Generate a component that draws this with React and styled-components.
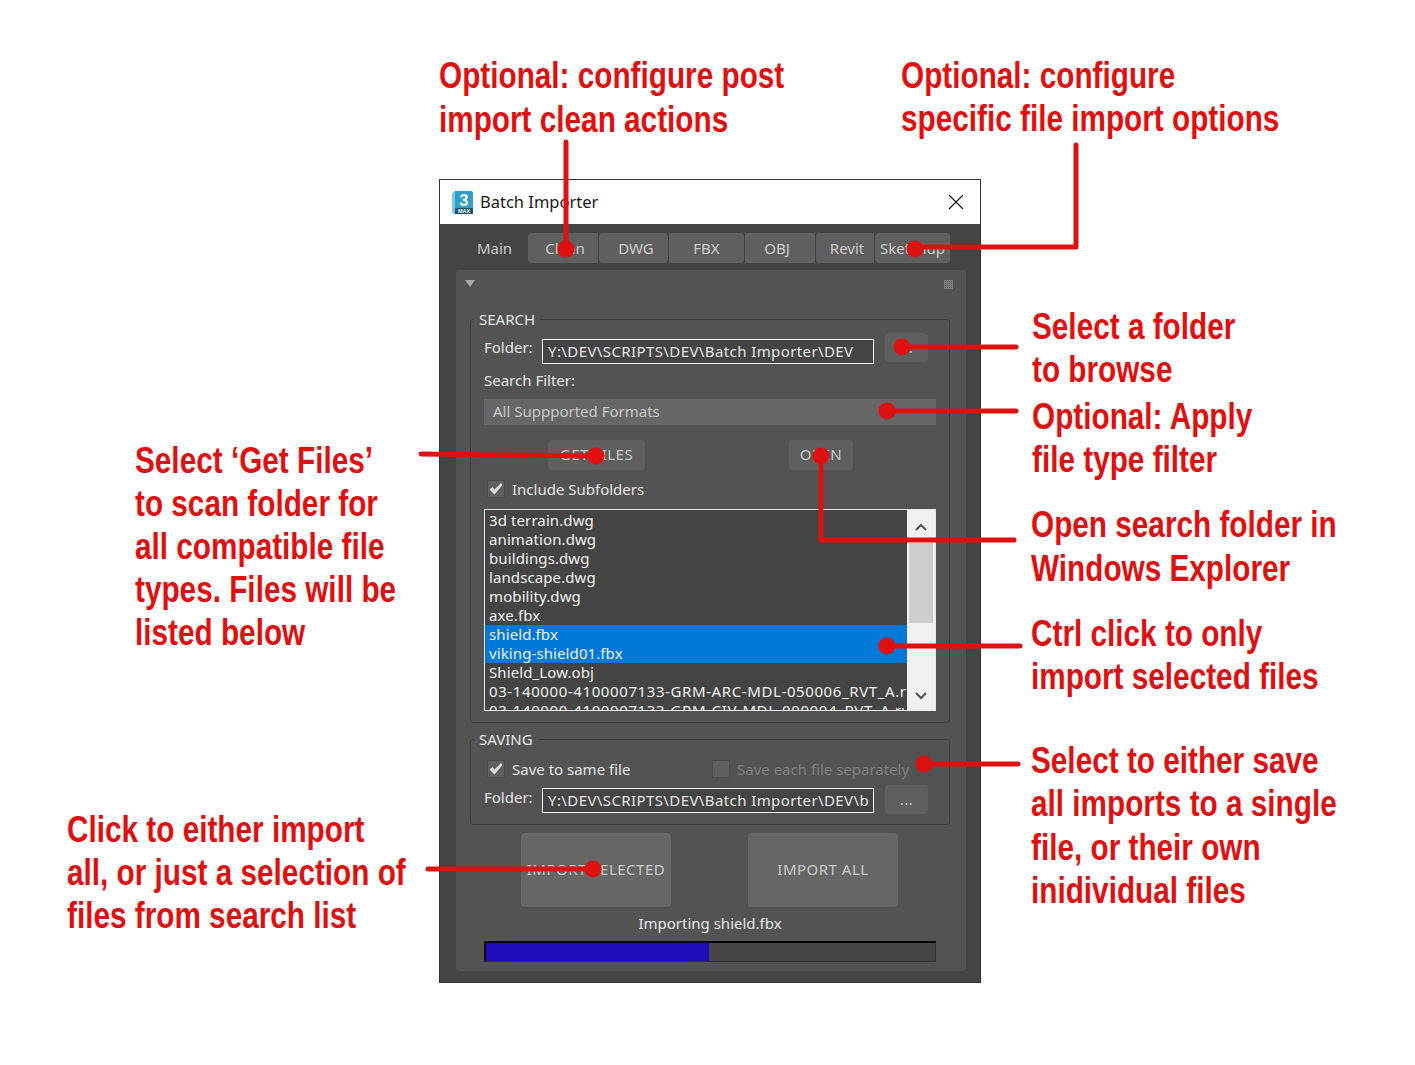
import React from 'react';
import styled, { createGlobalStyle } from 'styled-components';

const GlobalStyle = createGlobalStyle`
  html, body {
    margin: 0;
    background: #fff;
  }
`;

const Page = styled.div`
  position: relative;
  width: 1415px;
  height: 1065px;
  overflow: hidden;
  padding: 179px 0 0 439px;
  box-sizing: border-box;
  font-family: "Noto Sans", "DejaVu Sans Condensed", sans-serif;
  font-size: 15px;
  line-height: 16px;
`;

const Window = styled.div`
  width: 542px;
  height: 804px;
  box-sizing: border-box;
  border: 1px solid #333;
  background: #444;
  display: flex;
  flex-direction: column;
`;

const TitleBar = styled.div`
  height: 44px;
  flex: none;
  background: #fff;
  color: #1a1a1a;
  display: flex;
  align-items: center;
  padding: 0 16px 0 12px;
  font-size: 16.5px;
`;

const TitleText = styled.span`
  margin-left: 6px;
  flex: 1;
`;

const Tabs = styled.div`
  display: flex;
  margin: 9px 0 0 16px;
  height: 30px;
  gap: 1px;
`;

const Tab = styled.div`
  width: ${(p) => p.$w}px;
  box-sizing: border-box;
  display: flex;
  align-items: center;
  justify-content: center;
  padding: 0 ${(p) => p.$pr || 0}px 0 ${(p) => p.$pl || 0}px;
  color: #ccc;
  background: ${(p) => (p.$active ? 'transparent' : '#5f5f5f')};
  border-radius: ${(p) => p.$radius || '4px'};
`;

const Panel = styled.div`
  width: 510px;
  height: 701px;
  box-sizing: border-box;
  margin: 7px 0 0 16px;
  background: #535353;
  border-radius: 3px;
  padding: 0 17px 0 14px;
`;

const PanelHead = styled.div`
  height: 49px;
  display: flex;
  justify-content: space-between;
  padding-top: 10px;
  box-sizing: border-box;
  margin-left: -5px;
  margin-right: -4px;
`;

const Triangle = styled.div`
  width: 0;
  height: 0;
  border-left: 5px solid transparent;
  border-right: 5px solid transparent;
  border-top: 7px solid #a8a8a8;
`;

const Grip = styled.div`
  width: 9px;
  height: 9px;
  background-image: linear-gradient(#808080 1px, transparent 1px), linear-gradient(90deg, #808080 1px, #535353 1px);
  background-size: 2px 2px;
`;

const Group = styled.div`
  position: relative;
  box-sizing: border-box;
  width: 480px;
  height: ${(p) => p.$h}px;
  margin-top: ${(p) => p.$mt || 0}px;
  border: 1px solid #3e3e3e;
  border-radius: 3px;
  padding: ${(p) => p.$pt}px 0 0 13px;
`;

const Legend = styled.span`
  position: absolute;
  left: 3px;
  top: -9px;
  padding: 0 5px;
  background: #535353;
  color: #e6e6e6;
`;

const FolderRow = styled.div`
  display: flex;
  align-items: flex-start;
  height: 29px;
  margin-top: ${(p) => p.$mt || 0}px;
`;

const FieldLabel = styled.span`
  display: block;
  color: #e6e6e6;
  margin-top: ${(p) => p.$mt || 0}px;
  width: ${(p) => (p.$w ? `${p.$w}px` : 'auto')};
`;

const PathInput = styled.div`
  box-sizing: border-box;
  width: 332px;
  height: 25px;
  margin-top: ${(p) => p.$mt}px;
  border: 1px solid #f0f0f0;
  background: #444;
  color: #e6e6e6;
  padding: 0 5px;
  line-height: 22px;
  letter-spacing: 0.4px;
  white-space: nowrap;
  overflow: hidden;
`;

const Button = styled.div`
  box-sizing: border-box;
  width: ${(p) => p.$w}px;
  height: ${(p) => p.$h}px;
  margin-left: ${(p) => p.$ml || 0}px;
  padding-bottom: 2px;
  background: ${(p) => p.$bg || '#5f5f5f'};
  border-radius: 4px;
  color: #c8c8c8;
  letter-spacing: 0.5px;
  display: flex;
  align-items: center;
  justify-content: center;
  white-space: nowrap;
`;

const Select = styled.div`
  box-sizing: border-box;
  width: 452px;
  height: 26px;
  margin-top: 11px;
  background: #666;
  color: #c8c8c8;
  padding: 0 9px 2px;
  display: flex;
  align-items: center;
  justify-content: space-between;
`;

const SelectMark = styled.span`
  margin-right: 4px;
  width: 2px;
  height: 2px;
  background: #c8c8c8;
`;

const ButtonRow = styled.div`
  display: flex;
  margin-top: 15px;
  padding-left: 64px;
`;

const CheckRow = styled.div`
  display: flex;
  align-items: center;
  margin: ${(p) => p.$mt || 0}px 0 0 3px;
  height: 18px;
`;

const CheckOption = styled.div`
  display: flex;
  align-items: center;
  width: ${(p) => (p.$w ? `${p.$w}px` : 'auto')};
`;

const CheckBox = styled.span`
  box-sizing: border-box;
  width: 18px;
  height: 18px;
  background: #5f5f5f;
  border: 1px solid #4a4a4a;
  display: flex;
  align-items: center;
  justify-content: center;
`;

const CheckLabel = styled.span`
  margin-left: 7px;
  white-space: nowrap;
  color: ${(p) => (p.$disabled ? '#808080' : '#e6e6e6')};
`;

const ListBox = styled.div`
  box-sizing: border-box;
  width: 452px;
  height: 202px;
  margin-top: 11px;
  border: 1px solid #e6e6e6;
  background: #444;
  display: flex;
  overflow: hidden;
`;

const ListRows = styled.div`
  flex: 1;
  min-width: 0;
  padding-top: 1px;
  overflow: hidden;
`;

const ListRow = styled.div`
  height: 19px;
  line-height: 19px;
  padding-left: 4px;
  white-space: nowrap;
  letter-spacing: ${(p) => (p.$long ? '0.6px' : '0.1px')};
  color: #f0f0f0;
  background: ${(p) => (p.$selected ? '#0078d7' : 'transparent')};
`;

const ScrollBar = styled.div`
  width: 28px;
  flex: none;
  background: #f0f0f0;
  display: flex;
  flex-direction: column;
  align-items: center;
`;

const ScrollUp = styled.div`
  height: 33px;
  flex: none;
  display: flex;
  align-items: center;
  justify-content: center;
`;

const ScrollDown = styled.div`
  flex: 1;
  display: flex;
  align-items: flex-end;
  justify-content: center;
  padding-bottom: 10px;
`;

const ScrollThumb = styled.div`
  width: 24px;
  height: 80px;
  background: #cdcdcd;
  flex: none;
`;

const ImportRow = styled.div`
  display: flex;
  gap: 77px;
  margin: 8px 0 0 51px;
`;

const Status = styled.div`
  margin-top: 8px;
  width: 480px;
  text-align: center;
  color: #e6e6e6;
`;

const Progress = styled.div`
  box-sizing: border-box;
  width: 452px;
  height: 21px;
  margin: 10px 0 0 14px;
  background: #444;
  border-top: 2px solid #000;
  border-left: 2px solid #000;
  border-right: 1px solid #333;
  border-bottom: 1px solid #333;
`;

const ProgressFill = styled.div`
  height: 100%;
  background: #1f0cbf;
`;

const Callout = styled.div`
  position: absolute;
  left: ${(p) => p.$x}px;
  top: ${(p) => p.$y}px;
  color: #de1010;
  font-family: "Liberation Sans", sans-serif;
  font-weight: 700;
  font-size: 37.5px;
  line-height: ${(p) => p.$lh || 43.4}px;
  white-space: pre;
  transform: scaleX(0.793);
  transform-origin: left top;
`;

const Overlay = styled.svg`
  position: absolute;
  left: 0;
  top: 0;
  pointer-events: none;
`;

const MaxLogo = () => (
  <svg width="22" height="25" viewBox="0 0 22 25">
    <path d="M0 5 Q0 2 3 1 V18 H21 V24 H3 Q0 24 0 21 Z" fill="#7cc8de" />
    <path d="M3 1 H19 Q21 1 21 3 V18 H3 Z" fill="#2f9fc6" />
    <path d="M3 18 H21 V24 H3 Z" fill="#17566e" />
    <text x="12" y="15.5" textAnchor="middle" fontSize="16" fontWeight="700" fontFamily="Liberation Sans" fill="#fff">3</text>
    <text x="12" y="23" textAnchor="middle" fontSize="5.5" fontWeight="700" fontFamily="Liberation Sans" fill="#fff">MAX</text>
  </svg>
);

const CloseIcon = () => (
  <svg width="16" height="16" viewBox="0 0 16 16">
    <path d="M1 1 L15 15 M15 1 L1 15" stroke="#1a1a1a" strokeWidth="1.2" fill="none" />
  </svg>
);

const CheckMark = () => (
  <svg width="14" height="12" viewBox="0 0 14 12">
    <path d="M0.5 6.5 L3.5 4 L5.5 6.5 L12 0 L13.5 2 L5.5 11.5 Z" fill="#dcdcdc" />
  </svg>
);

const Chevron = ({ up }) => (
  <svg width="12" height="8" viewBox="0 0 12 8">
    <path d={up ? 'M1 7 L6 2 L11 7' : 'M1 1 L6 6 L11 1'} stroke="#555" strokeWidth="2" fill="none" />
  </svg>
);

const tabs = [
  { label: 'Main', w: 71, active: true, pl: 6 },
  { label: 'Clean', w: 70, radius: '4px 0 0 4px', pl: 4 },
  { label: 'DWG', w: 69, pl: 5 },
  { label: 'FBX', w: 75, radius: '0 4px 4px 0' },
  { label: 'OBJ', w: 70, radius: '0', pr: 6 },
  { label: 'Revit', w: 58, radius: '3px 0 0 3px', pl: 4 },
  { label: 'Sketchup', w: 75 },
];

const files = [
  '3d terrain.dwg',
  'animation.dwg',
  'buildings.dwg',
  'landscape.dwg',
  'mobility.dwg',
  'axe.fbx',
  'shield.fbx',
  'viking-shield01.fbx',
  'Shield_Low.obj',
  '03-140000-4100007133-GRM-ARC-MDL-050006_RVT_A.rvt',
  '03-140000-4100007133-GRM-CIV-MDL-000004_RVT_A.rvt',
];

const callouts = [
  { x: 439, y: 53, lh: 44, text: 'Optional: configure post\nimport clean actions' },
  { x: 901, y: 54, text: 'Optional: configure\nspecific file import options' },
  { x: 1032, y: 305, text: 'Select a folder\nto browse' },
  { x: 1032, y: 395, text: 'Optional: Apply\nfile type filter' },
  { x: 135, y: 439, lh: 43, text: 'Select ‘Get Files’\nto scan folder for\nall compatible file\ntypes. Files will be\nlisted below' },
  { x: 1031, y: 502, lh: 44, text: 'Open search folder in\nWindows Explorer' },
  { x: 1031, y: 612, text: 'Ctrl click to only\nimport selected files' },
  { x: 1031, y: 739, text: 'Select to either save\nall imports to a single\nfile, or their own\ninidividual files' },
  { x: 67, y: 808, lh: 43, text: 'Click to either import\nall, or just a selection of\nfiles from search list' },
];

const leaders = [
  'M566 142 V249',
  'M1076 145 V247 H915',
  'M902 347 H1016',
  'M887 411 H1016',
  'M421 454 L596 456',
  'M821 456 V540 H1014',
  'M887 646 H1020',
  'M924 764 H1018',
  'M428 869 H593',
];

const dots = [
  [566, 249], [915, 249], [902, 347], [887, 411], [596, 456],
  [821, 456], [887, 646], [924, 764], [593, 869],
];

const App = () => (
  <Page>
    <GlobalStyle />
    <Window>
      <TitleBar>
        <MaxLogo />
        <TitleText>Batch Importer</TitleText>
        <CloseIcon />
      </TitleBar>
      <Tabs>
        {tabs.map((tab) => (
          <Tab key={tab.label} $w={tab.w} $active={tab.active} $radius={tab.radius} $pl={tab.pl} $pr={tab.pr}>{tab.label}</Tab>
        ))}
      </Tabs>
      <Panel>
        <PanelHead>
          <Triangle />
          <Grip />
        </PanelHead>
        <Group $h={404} $pt={13}>
          <Legend>SEARCH</Legend>
          <FolderRow>
            <FieldLabel $w={58} $mt={6}>Folder:</FieldLabel>
            <PathInput $mt={6}>Y:\DEV\SCRIPTS\DEV\Batch Importer\DEV</PathInput>
            <Button $w={43} $h={29} $ml={11}>...</Button>
          </FolderRow>
          <FieldLabel $mt={10}>Search Filter:</FieldLabel>
          <Select>
            All Suppported Formats
            <SelectMark />
          </Select>
          <ButtonRow>
            <Button $w={97} $h={30}>GET FILES</Button>
            <Button $w={64} $h={30} $ml={144}>OPEN</Button>
          </ButtonRow>
          <CheckRow $mt={10}>
            <CheckOption>
              <CheckBox><CheckMark /></CheckBox>
              <CheckLabel>Include Subfolders</CheckLabel>
            </CheckOption>
          </CheckRow>
          <ListBox>
            <ListRows>
              {files.map((file, i) => (
                <ListRow key={file} $selected={i === 6 || i === 7} $long={i > 8}>{file}</ListRow>
              ))}
            </ListRows>
            <ScrollBar>
              <ScrollUp><Chevron up /></ScrollUp>
              <ScrollThumb />
              <ScrollDown><Chevron /></ScrollDown>
            </ScrollBar>
          </ListBox>
        </Group>
        <Group $h={86} $mt={16} $pt={20}>
          <Legend>SAVING</Legend>
          <CheckRow>
            <CheckOption $w={225}>
              <CheckBox><CheckMark /></CheckBox>
              <CheckLabel>Save to same file</CheckLabel>
            </CheckOption>
            <CheckOption>
              <CheckBox />
              <CheckLabel $disabled>Save each file separately</CheckLabel>
            </CheckOption>
          </CheckRow>
          <FolderRow $mt={7}>
            <FieldLabel $w={58} $mt={4}>Folder:</FieldLabel>
            <PathInput $mt={3}>Y:\DEV\SCRIPTS\DEV\Batch Importer\DEV\b</PathInput>
            <Button $w={43} $h={29} $ml={11}>...</Button>
          </FolderRow>
        </Group>
        <ImportRow>
          <Button $w={150} $h={74} $bg="#666">IMPORT SELECTED</Button>
          <Button $w={150} $h={74} $bg="#666">IMPORT ALL</Button>
        </ImportRow>
        <Status>Importing shield.fbx</Status>
        <Progress>
          <ProgressFill style={{ width: '49.6%' }} />
        </Progress>
      </Panel>
    </Window>
    {callouts.map((c) => (
      <Callout key={c.text} $x={c.x} $y={c.y} $lh={c.lh}>{c.text}</Callout>
    ))}
    <Overlay width="1415" height="1065">
      {leaders.map((d) => (
        <path key={d} d={d} stroke="#de1010" strokeWidth="5" strokeLinecap="round" strokeLinejoin="round" fill="none" />
      ))}
      {dots.map(([cx, cy]) => (
        <circle key={`${cx}-${cy}`} cx={cx} cy={cy} r="8.5" fill="#de1010" />
      ))}
    </Overlay>
  </Page>
);

export default App;
